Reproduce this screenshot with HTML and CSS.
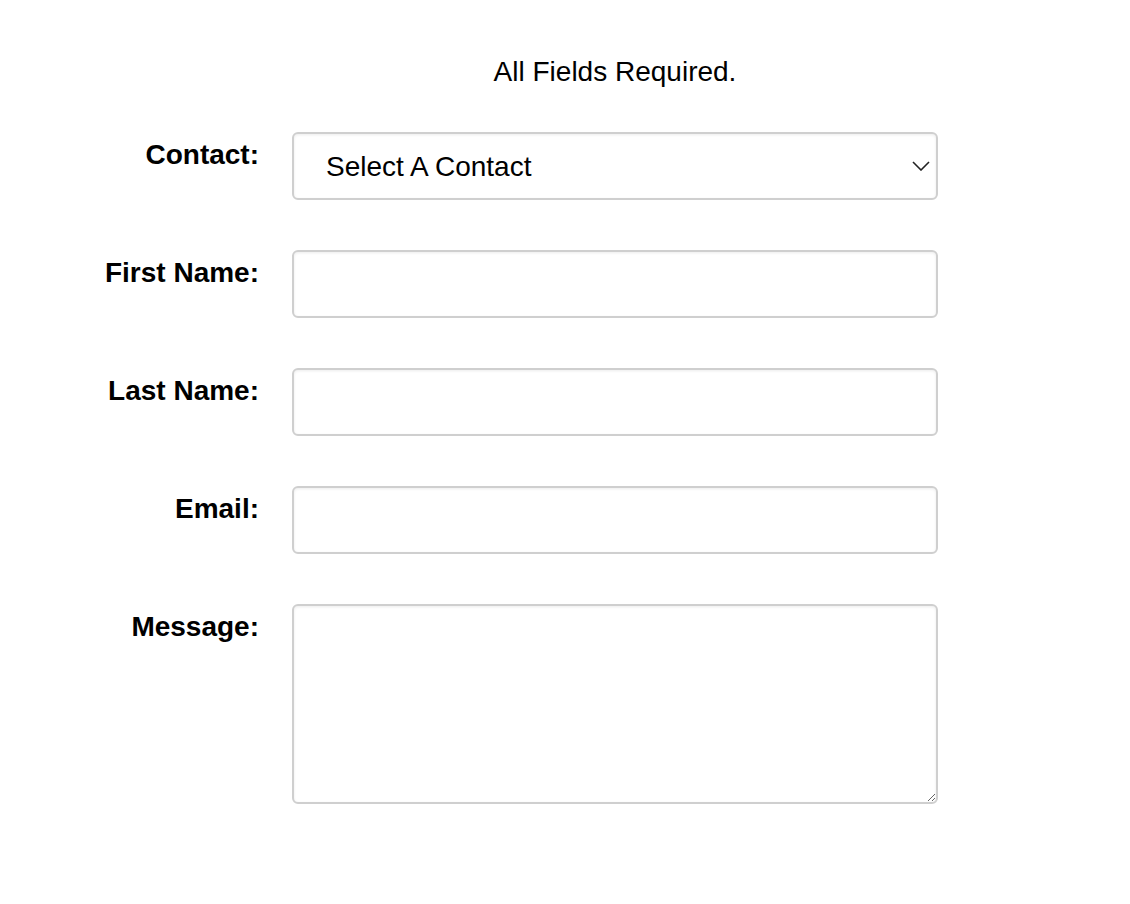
FILE: index.html
```html
<!DOCTYPE html>
<html lang="en">
<head>
  <meta charset="UTF-8">
  <meta name="viewport" content="width=device-width, initial-scale=1.0">
  <title>Contact Form</title>
  <link rel="stylesheet" href="styles.css">
</head>
<body>
  <form class="contact-form">
    <p class="required">All Fields Required.</p>

    <label for="contact">Contact:</label>
    <div class="select-wrap">
      <select id="contact">
        <option>Select A Contact</option>
      </select>
      <svg class="chevron" width="18" height="10" viewBox="0 0 18 10">
        <path d="M1 1 L9 9 L17 1" fill="none" stroke="#222" stroke-width="1.6"/>
      </svg>
    </div>

    <label for="first">First Name:</label>
    <input type="text" id="first">

    <label for="last">Last Name:</label>
    <input type="text" id="last">

    <label for="email">Email:</label>
    <input type="email" id="email">

    <label for="message">Message:</label>
    <textarea id="message"></textarea>
  </form>
</body>
</html>
```

FILE: styles.css
```css
body {
  margin: 0;
  font-family: "Liberation Sans", Arial, sans-serif;
  color: #000;
  background: #fff;
}
.contact-form {
  display: grid;
  grid-template-columns: 251px 646px;
  column-gap: 33px;
  row-gap: 50px;
  padding: 56px 0 0 8px;
}
.required {
  grid-column: 2;
  margin: 0 0 -6px;
  text-align: center;
  font-size: 28px;
  line-height: 32px;
}
label {
  text-align: right;
  font-weight: bold;
  font-size: 28px;
  line-height: 32px;
  padding-top: 7px;
}
input,
select,
textarea {
  box-sizing: border-box;
  width: 646px;
  height: 68px;
  border: 2px solid #cfcfcf;
  border-radius: 6px;
  box-shadow: inset 0 1px 3px rgba(0, 0, 0, 0.08);
  background: #fff;
  font-family: inherit;
  font-size: 28px;
  color: #000;
  margin: 0;
}
.select-wrap {
  position: relative;
}
select {
  appearance: none;
  padding: 0 0 0 32px;
}
.chevron {
  position: absolute;
  right: 8px;
  top: 29px;
}
textarea {
  height: 200px;
  resize: vertical;
}
```
